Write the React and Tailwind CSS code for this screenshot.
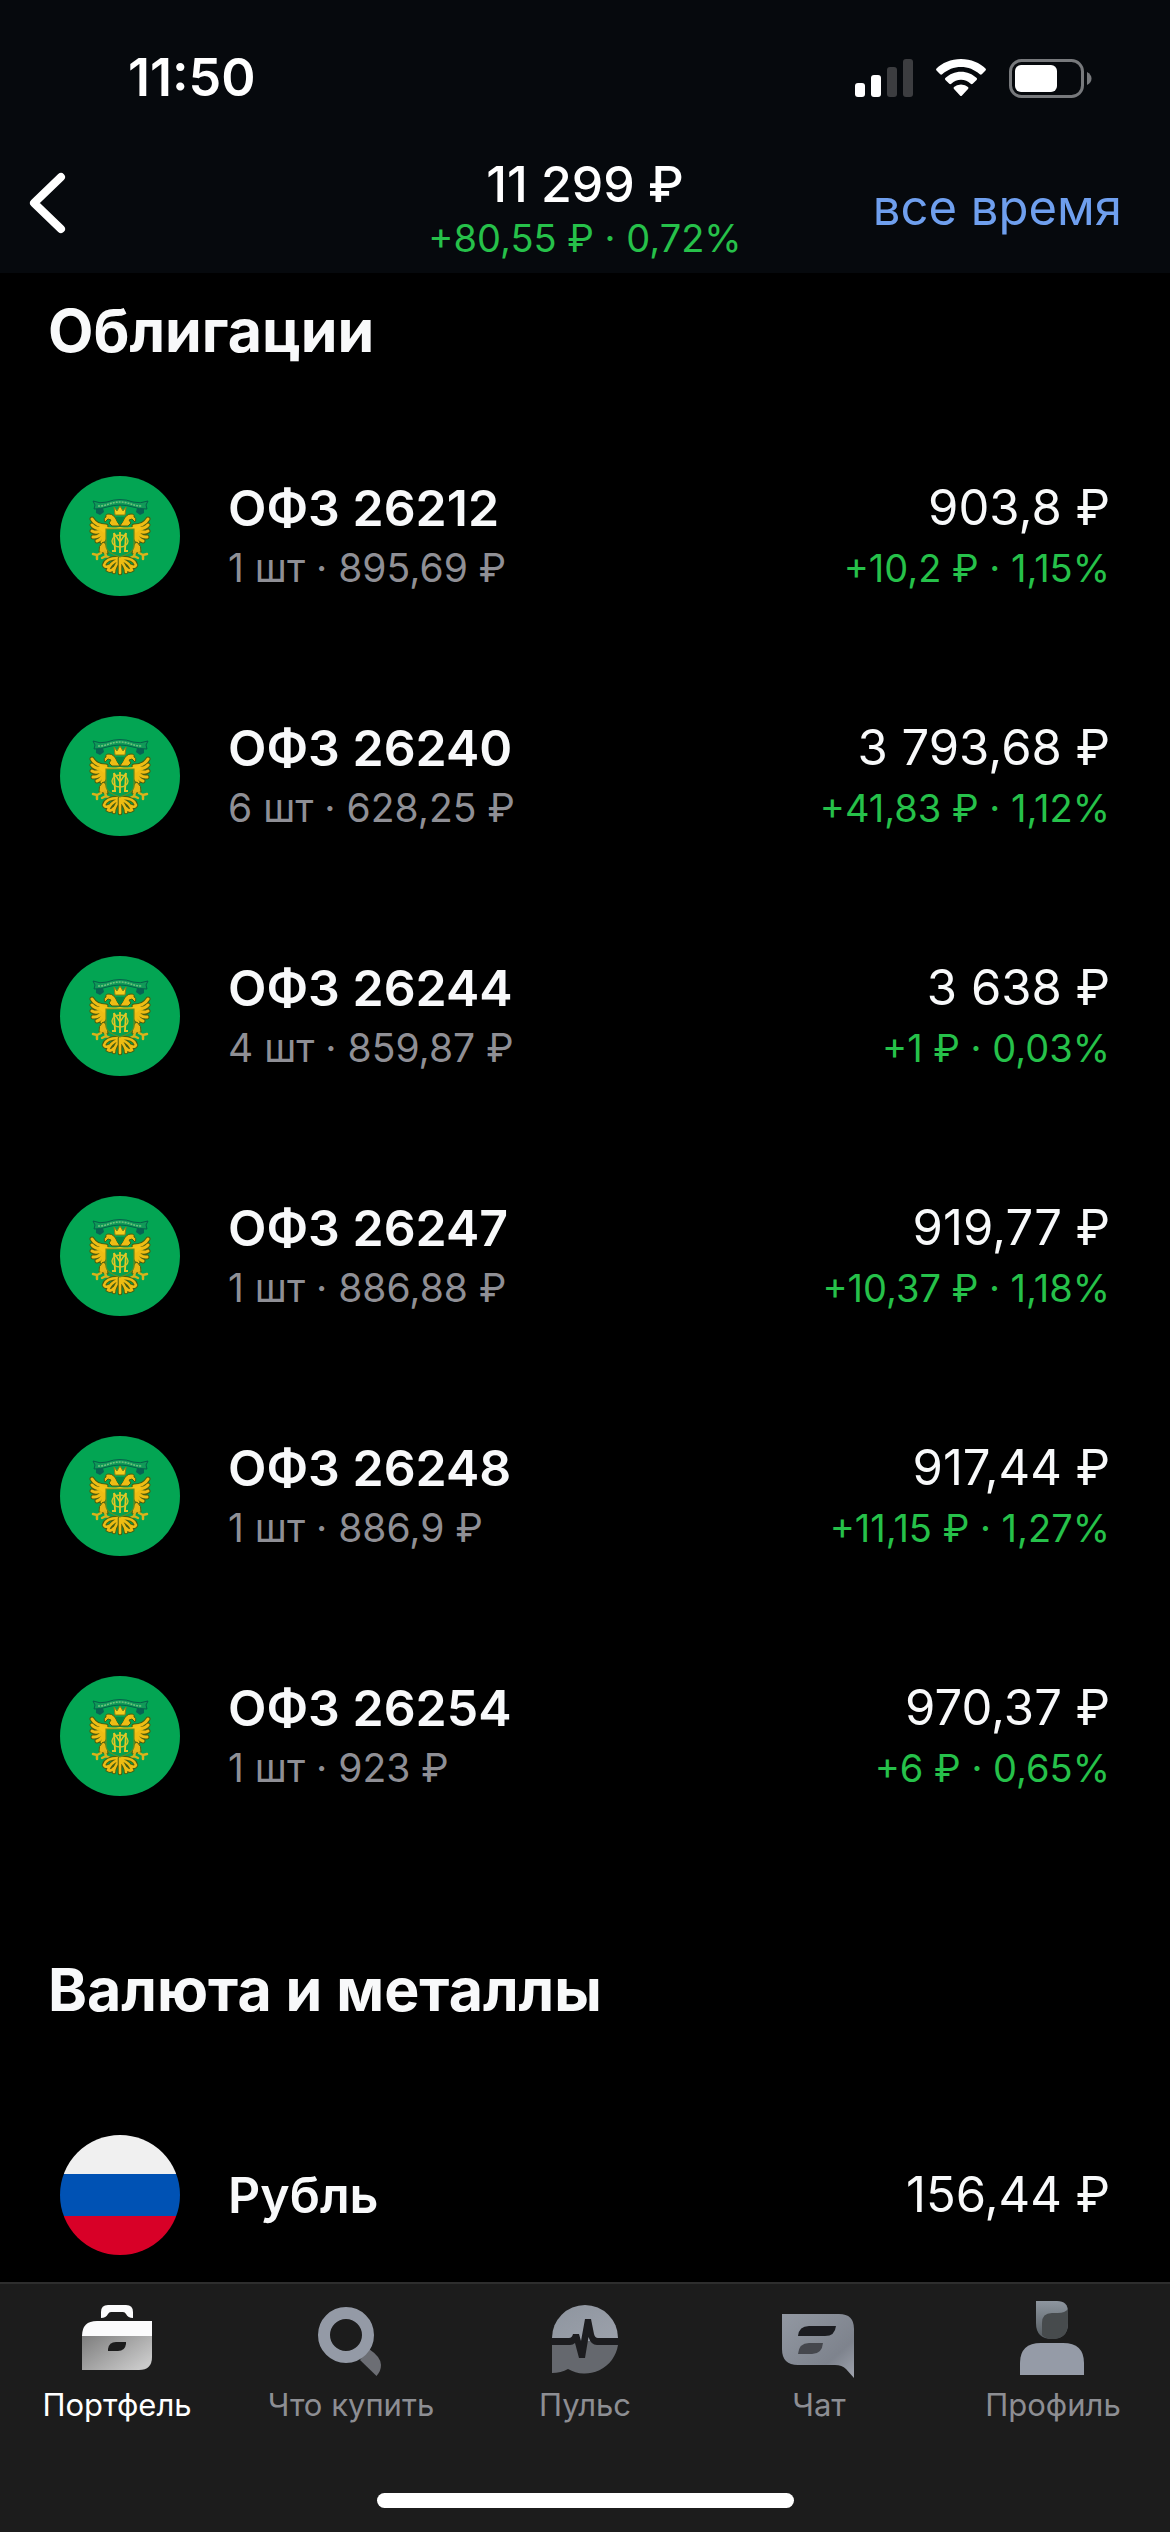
import React from 'react';

const bonds = [
  { name: 'ОФЗ 26212', detail: '1 шт · 895,69 ₽', value: '903,8 ₽', change: '+10,2 ₽ · 1,15%' },
  { name: 'ОФЗ 26240', detail: '6 шт · 628,25 ₽', value: '3 793,68 ₽', change: '+41,83 ₽ · 1,12%' },
  { name: 'ОФЗ 26244', detail: '4 шт · 859,87 ₽', value: '3 638 ₽', change: '+1 ₽ · 0,03%' },
  { name: 'ОФЗ 26247', detail: '1 шт · 886,88 ₽', value: '919,77 ₽', change: '+10,37 ₽ · 1,18%' },
  { name: 'ОФЗ 26248', detail: '1 шт · 886,9 ₽', value: '917,44 ₽', change: '+11,15 ₽ · 1,27%' },
  { name: 'ОФЗ 26254', detail: '1 шт · 923 ₽', value: '970,37 ₽', change: '+6 ₽ · 0,65%' },
];

function SignalIcon() {
  return (
    <svg width="58" height="38" viewBox="0 0 58 38" aria-hidden="true">
      <rect x="0" y="24" width="10" height="14" rx="3" fill="#fff" />
      <rect x="16" y="16" width="10" height="22" rx="3" fill="#fff" />
      <rect x="32" y="8" width="10" height="30" rx="3" fill="#3c3d40" />
      <rect x="48" y="0" width="10" height="38" rx="3" fill="#3c3d40" />
    </svg>
  );
}

function WifiIcon() {
  return (
    <svg width="52" height="38" viewBox="0 0 52 38" aria-hidden="true">
      <path d="M26 0C36 0 45 4 50.500 9.500Q51.500 10.600 50.500 11.600L46.800 15.300Q45.800 16.200 44.800 15.300C39.500 10.500 33 8 26 8S12.500 10.500 7.200 15.300Q6.200 16.200 5.200 15.300L1.500 11.600Q.5 10.600 1.500 9.500C7 4 16 0 26 0Z" fill="#fff" />
      <path d="M26 12.700C32 12.700 37.500 15 41.700 19Q42.500 20 41.600 21L37.700 24.800Q36.700 25.600 35.700 24.700C33 22.200 29.700 20.700 26 20.700S19 22.200 16.300 24.700Q15.300 25.600 14.300 24.800L10.400 21Q9.500 20 10.300 19C14.500 15 20 12.700 26 12.700Z" fill="#fff" />
      <path d="M26 25.500Q30.500 25.500 33 28Q34 29 33 30L27 36.600Q26 37.600 25 36.600L19 30Q18 29 19 28Q21.500 25.500 26 25.500Z" fill="#fff" />
    </svg>
  );
}

function BatteryIcon() {
  return (
    <svg width="83" height="39" viewBox="0 0 83 39" aria-hidden="true">
      <rect x="1.500" y="1.500" width="72" height="36" rx="11" fill="none" stroke="#77797c" strokeWidth="3" />
      <rect x="6" y="6" width="42" height="27" rx="6" fill="#fff" />
      <path d="M78 13Q82.500 15.500 82.500 19.500T78 26Z" fill="#77797c" />
    </svg>
  );
}

function Emblem() {
  const wingFeathers = 'M46 50Q36 50 32 43M45 52Q36 54 32 49M44 53Q37 58 32 55M44 54Q39 62 33 61M45 54Q42 64 37 65M47 54Q46 62 42 66';
  const tailFeathers = 'M58 82Q46 82 44 89Q45 92 49 90M58 84Q50 87 48 94Q51 96 54 92M59 85Q54 91 54 96M60 82V97';
  const half = (
    <g>
      <path d={wingFeathers} fill="none" stroke="#4a5d10" strokeWidth="5" strokeLinecap="round" />
      <path d={wingFeathers} fill="none" stroke="#eebc13" strokeWidth="3" strokeLinecap="round" />
      <path d="M40 48Q46 53 60 51V54H47L44 57L39 53Z" fill="#f2c318" />
      <path d="M45 46Q43 42 46 41Q45 38 49 38Q54 38 57 45L60 50L52 50L49 47L51 44L48 43Z" fill="#eebc13" stroke="#4a5d10" strokeWidth="1" />
      <path d="M43 66Q38 70 39 76L48 78Q48 71 45 67Z" fill="#e5b616" stroke="#4a5d10" strokeWidth="1" />
      <path d="M33 78L37 79L41 77M37 79V83M45 76L46 80L50 82M46 80L42 82" fill="none" stroke="#d9b21a" strokeWidth="2.500" strokeLinecap="round" />
      <path d={tailFeathers} fill="none" stroke="#4a5d10" strokeWidth="4.500" strokeLinecap="round" />
      <path d={tailFeathers} fill="none" stroke="#eebc13" strokeWidth="2.600" strokeLinecap="round" />
      <path d="M36 33L43 32L44 36L40 39L36 37Z" fill="#086354" />
    </g>
  );
  return (
    <svg viewBox="0 0 120 120" className="size-30 shrink-0" aria-hidden="true">
      <circle cx="60" cy="60" r="60" fill="#03a553" />
      {half}
      <g transform="matrix(-1 0 0 1 120 0)">{half}</g>
      <path d="M54 31L57 35L60 30L63 35L66 31L65 39H55Z" fill="#f2cd1f" stroke="#8a8013" strokeWidth="1" />
      <path d="M56 41H64L63 46L60 48L57 46Z" fill="#058a41" />
      <path d="M46 53H74V71Q73 77 60 81Q47 77 46 71Z" fill="#05a04c" stroke="#6f8d18" strokeWidth="1.200" />
      <path d="M54 57L55 74M66 57L65 74M60 56V77M52 75H56M64 75H68" fill="none" stroke="#e3c827" strokeWidth="1.800" />
      <path d="M54 57L60 66L66 57" fill="none" stroke="#e3c827" strokeWidth="1.400" />
      <ellipse cx="60" cy="65" rx="8" ry="6" fill="none" stroke="#d5c427" strokeWidth="1.400" />
      <path d="M33 25Q40 28 47 26Q60 21 73 26Q80 28 88 25L86 29L87 33Q79 33 73 31Q60 27 47 31Q41 33 34 33L35 29Z" fill="#109a58" stroke="#06604a" strokeWidth="1" />
      <path d="M38 30Q44 30 49 28Q60 24 71 28Q76 30 82 30" fill="none" stroke="#6cc37b" strokeWidth="1.600" strokeDasharray="2 1" />
    </svg>
  );
}

function RubleFlag() {
  return (
    <span className="flex size-30 shrink-0 flex-col overflow-hidden rounded-full" aria-hidden="true">
      <span className="h-[39px] bg-[#f0f0f0]" />
      <span className="h-[42px] bg-[#0052b4]" />
      <span className="flex-1 bg-[#d80027]" />
    </span>
  );
}

function BriefcaseIcon() {
  return (
    <>
      <defs>
        <linearGradient id="case" x1="0" y1="0" x2="1" y2="0.700">
          <stop offset="0" stopColor="#7d7d7d" />
          <stop offset="1" stopColor="#c9c9c9" />
        </linearGradient>
      </defs>
      <path d="M24 19V13Q24 6 31 6H49Q56 6 56 13V19Q51 19 49 15Q48 13 46 13H34Q32 13 31 15Q29 19 24 19Z" fill="#fbfbfc" />
      <path d="M5 37Q5 22 20 22H75V37Z" fill="#fbfbfc" />
      <path d="M5 37H75V58Q75 71 62 71H5Z" fill="url(#case)" />
      <path d="M31 52V50Q32 43 39 43H49V45Q48 52 41 52Z" fill="#1c1c1c" />
    </>
  );
}

function SearchIcon() {
  return (
    <>
      <path d="M58 50Q70 58 70 66Q70 72 65.500 77L49 61Z" fill="#6c6e74" />
      <circle cx="35" cy="36" r="22" fill="none" stroke="#949aa6" strokeWidth="12" />
    </>
  );
}

function PulseIcon() {
  return (
    <>
      <defs>
        <linearGradient id="pulse-top" x1="0" y1="0" x2="1" y2="1">
          <stop offset="0" stopColor="#8e959f" />
          <stop offset="1" stopColor="#9ca1ab" />
        </linearGradient>
      </defs>
      <path d="M7 39A33 33 0 0 1 73 39V42H7Z" fill="url(#pulse-top)" />
      <path d="M7 42H73V46A33.500 33.500 0 0 1 23 70Q16 74 7 74Z" fill="#65686e" />
      <path d="M6 39H24Q27 39 28 35H34L36 42L40 20H46L49 35Q50 39 53 39H74V46H52Q46 46 43.500 38L40 59H34L30 44Q28 46 25 46H6Z" fill="#1c1c1f" />
    </>
  );
}

function ChatIcon() {
  return (
    <>
      <defs>
        <linearGradient id="bubble" x1="0" y1="0" x2="1" y2="1">
          <stop offset="0" stopColor="#9298a2" />
          <stop offset="0.700" stopColor="#7e838d" />
          <stop offset="1" stopColor="#a0a4ae" />
        </linearGradient>
      </defs>
      <path d="M3 15H60Q75 15 75 30V79L67 70Q63 66 56 66H19Q3 66 3 50Z" fill="url(#bubble)" />
      <path d="M19 37Q20 27 30 27H57Q56 37 46 37Z" fill="#1b1c20" />
      <path d="M19 55Q20 44 30 44H44Q43 55 33 55Z" fill="#45474d" />
    </>
  );
}

function ProfileIcon() {
  return (
    <>
      <defs>
        <linearGradient id="hair" x1="0" y1="0" x2="0" y2="1">
          <stop offset="0" stopColor="#8e969f" />
          <stop offset="1" stopColor="#555b60" />
        </linearGradient>
      </defs>
      <path d="M23 2H44Q55 2 55 13V24Q55 40 39 40Q23 40 23 24Z" fill="url(#hair)" />
      <path d="M29 36V24Q29 14 39 14H45Q52 14 55 10V24Q55 40 39 40Q33 40 29 36Z" fill="#474b4d" />
      <path d="M7 76V64Q7 44 28 44H50Q71 44 71 64V76Z" fill="#959ba7" />
    </>
  );
}

const tabs = [
  { label: 'Портфель', Icon: BriefcaseIcon, active: true },
  { label: 'Что купить', Icon: SearchIcon },
  { label: 'Пульс', Icon: PulseIcon },
  { label: 'Чат', Icon: ChatIcon },
  { label: 'Профиль', Icon: ProfileIcon },
];

function Row({ icon, name, detail, value, change }) {
  return (
    <li className="flex items-center gap-12 px-15">
      {icon}
      <div className="flex-1">
        <p className="text-[50px] leading-16 font-semibold">{name}</p>
        {detail && <p className="text-[39px] leading-14 text-[#8f8f95]">{detail}</p>}
      </div>
      <div className="text-right">
        <p className="text-[49px] leading-16">{value}</p>
        {change && <p className="text-[38px] leading-14 text-[#26c14a]">{change}</p>}
      </div>
    </li>
  );
}

export default function App() {
  return (
    <div className="flex min-h-screen flex-col bg-black font-['Inter',sans-serif] text-[#f8f9fa]">
      <header className="bg-[#06090d] pb-[11px] text-white">
        <div className="flex items-center justify-between pt-12 pr-[78px] pb-[46px] pl-32">
          <time className="text-[52px] leading-15 font-semibold">11:50</time>
          <div className="flex items-center gap-[22px]">
            <SignalIcon />
            <WifiIcon />
            <BatteryIcon />
          </div>
        </div>
        <div className="grid grid-cols-[1fr_auto_1fr] items-center">
          <button type="button" aria-label="Назад" className="justify-self-start pb-2 pl-7">
            <svg width="40" height="64" viewBox="0 0 40 64" aria-hidden="true">
              <path d="M33 5L6 31L33 57" fill="none" stroke="#fff" strokeWidth="8" strokeLinecap="round" strokeLinejoin="round" />
            </svg>
          </button>
          <div className="text-center">
            <p className="text-[50px] leading-15 font-medium">11 299 ₽</p>
            <p className="text-[38px] leading-12 text-[#26c14a]">+80,55 ₽ · 0,72%</p>
          </div>
          <button type="button" className="justify-self-end pr-12 text-[49px] leading-15 text-[#6f9fee]">
            все время
          </button>
        </div>
      </header>

      <main className="flex-1 pb-[27px]">
        <section>
          <h2 className="px-12 pt-[18px] text-[59px] leading-20 font-bold">Облигации</h2>
          <ul className="flex flex-col gap-30 pt-[105px]">
            {bonds.map((bond) => (
              <Row key={bond.name} icon={<Emblem />} {...bond} />
            ))}
          </ul>
        </section>
        <section>
          <h2 className="px-12 pt-[154px] text-[59px] leading-20 font-bold">Валюта и металлы</h2>
          <ul className="pt-[105px]">
            <Row icon={<RubleFlag />} name="Рубль" value="156,44 ₽" />
          </ul>
        </section>
      </main>

      <footer className="sticky bottom-0 border-t-2 border-[#2e2e2e] bg-[#1c1c1c] pt-[15px] pb-6">
        <nav className="grid grid-cols-5">
          {tabs.map(({ label, Icon, active }) => (
            <button
              key={label}
              type="button"
              aria-current={active ? 'page' : undefined}
              className={active ? 'flex flex-col items-center gap-2 text-white' : 'flex flex-col items-center gap-2 text-[#8d8e93]'}
            >
              <svg viewBox="0 0 80 80" className="size-20" aria-hidden="true">
                <Icon />
              </svg>
              <span className="text-[31px] leading-9">{label}</span>
            </button>
          ))}
        </nav>
        <div className="mx-auto mt-[70px] h-[15px] w-[417px] rounded-full bg-white" />
      </footer>
    </div>
  );
}
